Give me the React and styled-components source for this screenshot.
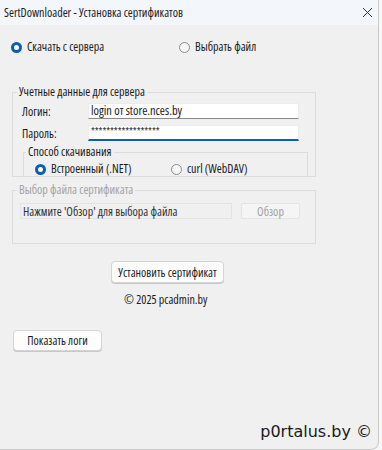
import React from "react";
import styled, { createGlobalStyle } from "styled-components";

const Global = createGlobalStyle`
  html, body { margin: 0; padding: 0; background: #f7f7f7; }
  body { font-family: "Open Sans", "Noto Sans", sans-serif; }
  * { box-sizing: border-box; }
`;

const Window = styled.div`
  position: relative;
  width: 379px;
  height: 450px;
  background: #f0f0f0;
  border-right: 1px solid #c9c9c9;
  border-bottom: 1px solid #c9c9c9;
  border-bottom-right-radius: 8px;
  overflow: hidden;
  font-family: "Open Sans", "Noto Sans", sans-serif;
  font-stretch: 75%;
  font-size: 12px;
  color: #1a1a1a;
  display: flex;
  flex-direction: column;
`;

const TitleBar = styled.div`
  height: 25px;
  flex: none;
  display: flex;
  align-items: center;
  justify-content: space-between;
  padding: 0 5px 0 4px;
  background: #f3f6fb;
  color: #1b1b1b;
  font-size: 12px;
`;

const Close = styled.div`
  width: 12px;
  height: 12px;
  display: flex;
  align-items: center;
  justify-content: center;
`;

const Body = styled.div`
  display: flex;
  flex-direction: column;
  align-items: flex-start;
  padding-left: 12px;
`;

const RadioRow = styled.div`
  display: grid;
  grid-template-columns: ${(p) => p.$cols};
  align-items: center;
  height: 14px;
  margin-top: ${(p) => p.$mt || 0}px;
  margin-left: ${(p) => p.$ml || 0}px;
`;

const RadioLabel = styled.label`
  display: flex;
  align-items: center;
  gap: 5px;
  line-height: 14px;
  white-space: nowrap;
`;

const RadioDot = styled.span`
  width: 11px;
  height: 11px;
  border-radius: 50%;
  flex: none;
  box-sizing: border-box;
  background: ${(p) => (p.$on ? "#ffffff" : "#f6f6f6")};
  border: ${(p) => (p.$on ? "3.5px solid #0a5fb4" : "1px solid #8c8c8c")};
`;

const Group = styled.fieldset`
  margin: ${(p) => p.$mt || 0}px 0 0 ${(p) => p.$ml || 0}px;
  width: ${(p) => p.$w}px;
  padding: ${(p) => p.$pt || 0}px 0 ${(p) => p.$pb || 0}px 0;
  border: 1px solid #dcdcdc;
  border-bottom: ${(p) => (p.$open ? "none" : "1px solid #dcdcdc")};
  min-width: 0;
  display: flex;
  flex-direction: column;
  align-items: flex-start;
`;

const Legend = styled.legend`
  padding: 0 2px;
  margin-left: ${(p) => p.$ml || 4}px;
  line-height: 14px;
  height: 14px;
  color: ${(p) => (p.$disabled ? "#a3a3a3" : "#1a1a1a")};
`;

const FieldRow = styled.div`
  display: flex;
  align-items: center;
  height: 16px;
  margin-top: ${(p) => p.$mt || 0}px;
`;

const FieldLabel = styled.span`
  width: 66px;
  margin-left: 9px;
`;

const Input = styled.div`
  width: 211px;
  height: 16px;
  background: #ffffff;
  border: 1px solid #ececec;
  border-bottom: ${(p) => (p.$focus ? "2px solid #0a5fb4" : "1px solid #8a8a8a")};
  padding-left: 2px;
  display: flex;
  align-items: ${(p) => (p.$focus ? "flex-start" : "center")};
  line-height: ${(p) => (p.$focus ? "10px" : "14px")};
  font-size: ${(p) => (p.$focus ? "10px" : "12.4px")};
  color: #1a1a1a;
  letter-spacing: ${(p) => (p.$focus ? "-0.1px" : "0")};
`;

const FileRow = styled.div`
  display: flex;
  align-items: center;
  gap: 9px;
  margin-left: 7px;
`;

const FileBox = styled.div`
  width: 212px;
  height: 16px;
  background: #f0f0f0;
  border: 1px solid #e3e3e3;
  padding-left: 2px;
  display: flex;
  align-items: center;
  color: #303030;
`;

const Button = styled.div`
  width: ${(p) => p.$w}px;
  height: ${(p) => p.$h || 22}px;
  margin: ${(p) => p.$mt || 0}px 0 0 ${(p) => p.$ml || 0}px;
  display: flex;
  align-items: center;
  justify-content: center;
  background: ${(p) => (p.$disabled ? "#f5f5f5" : "#fdfdfd")};
  border: 1px solid ${(p) => (p.$disabled ? "#e4e4e4" : "#d4d4d4")};
  border-radius: ${(p) => (p.$disabled ? 2 : 4)}px;
  color: ${(p) => (p.$disabled ? "#a0a0a0" : "#1a1a1a")};
  box-shadow: ${(p) => (p.$disabled ? "none" : "0 1px 0 #c8c8c8")};
  white-space: nowrap;
`;

const Copyright = styled.div`
  margin: 10px 0 0 112px;
  line-height: 14px;
  color: #1a1a1a;
`;

const Watermark = styled.div`
  position: absolute;
  right: 6px;
  bottom: 8px;
  font-family: "DejaVu Sans", sans-serif;
  font-stretch: 100%;
  font-size: 16px;
  color: #1a1a1a;
  line-height: 18px;
`;

export default function App() {
  return (
    <>
      <Global />
      <Window>
        <TitleBar>
          <span>SertDownloader - Установка сертификатов</span>
          <Close>
            <svg width="11" height="11" viewBox="0 0 11 11">
              <path d="M1 1 L10 10 M10 1 L1 10" stroke="#333" strokeWidth="1" />
            </svg>
          </Close>
        </TitleBar>
        <Body>
          <RadioRow $cols="168px auto" $mt={15} $ml={-1}>
            <RadioLabel>
              <RadioDot $on />
              Скачать с сервера
            </RadioLabel>
            <RadioLabel>
              <RadioDot />
              Выбрать файл
            </RadioLabel>
          </RadioRow>

          <Group $mt={31} $w={304} $pt={4}>
            <Legend>Учетные данные для сервера</Legend>
            <FieldRow>
              <FieldLabel>Логин:</FieldLabel>
              <Input>login от store.nces.by</Input>
            </FieldRow>
            <FieldRow $mt={6}>
              <FieldLabel>Пароль:</FieldLabel>
              <Input $focus>******************</Input>
            </FieldRow>
            <Group $mt={4} $ml={10} $w={285} $pt={3} $open>
              <Legend $ml={2}>Способ скачивания</Legend>
              <RadioRow $cols="136px auto" $ml={11}>
                <RadioLabel>
                  <RadioDot $on />
                  Встроенный (.NET)
                </RadioLabel>
                <RadioLabel>
                  <RadioDot />
                  curl (WebDAV)
                </RadioLabel>
              </RadioRow>
            </Group>
          </Group>

          <Group $mt={6} $w={304} $pt={6} $pb={24}>
            <Legend $disabled>Выбор файла сертификата</Legend>
            <FileRow>
              <FileBox>Нажмите 'Обзор' для выбора файла</FileBox>
              <Button $w={59} $h={16} $disabled>
                Обзор
              </Button>
            </FileRow>
          </Group>

          <Button $w={113} $mt={17} $ml={99}>
            Установить сертификат
          </Button>
          <Copyright>© 2025 pcadmin.by</Copyright>
          <Button $w={89} $h={21} $mt={23} $ml={1}>
            Показать логи
          </Button>
        </Body>
        <Watermark>p0rtalus.by ©</Watermark>
      </Window>
    </>
  );
}
